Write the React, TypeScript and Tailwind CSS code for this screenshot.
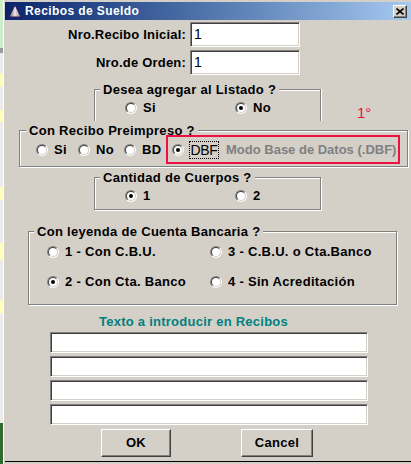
import React from 'react'

type RadioProps = {
  label: string
  checked?: boolean
  className?: string
}

function RadioDot({ checked }: { checked?: boolean }) {
  return (
    <span className="flex h-[12px] w-[12px] shrink-0 items-center justify-center rounded-full border border-t-[#808080] border-l-[#808080] border-b-white border-r-white">
      <span className="flex h-[10px] w-[10px] items-center justify-center rounded-full border border-t-[#404040] border-l-[#404040] border-b-[#d4d0c8] border-r-[#d4d0c8] bg-white">
        {checked && <span className="h-[4px] w-[4px] rounded-full bg-black" />}
      </span>
    </span>
  )
}

function Radio({ label, checked, className = '' }: RadioProps) {
  return (
    <label className={`flex h-[14px] items-center ${className}`}>
      <RadioDot checked={checked} />
      <span className="ml-[6px] text-[13px] leading-[14px] font-bold tracking-[0.3px]">{label}</span>
    </label>
  )
}

function Group({
  title,
  className = '',
  legendClass = 'ml-[5px]',
  children,
}: {
  title: string
  className?: string
  legendClass?: string
  children: React.ReactNode
}) {
  return (
    <fieldset className={`border border-[#808080] ${className}`}>
      <legend className={`bg-[#d4d0c8] px-[3px] text-[13px] leading-[13px] font-bold tracking-[0.3px] ${legendClass}`}>
        {title}
      </legend>
      {children}
    </fieldset>
  )
}

const sunken =
  'border border-t-[#808080] border-l-[#808080] border-b-white border-r-white bg-white shadow-[inset_1px_1px_0_#404040,inset_-1px_-1px_0_#d4d0c8]'

const raised =
  'border border-t-white border-l-white border-b-[#404040] border-r-[#404040] bg-[#d4d0c8] shadow-[inset_-1px_-1px_0_#808080]'

// what shows of the window behind, at the left edge
const strip = [
  { h: 48, c: '#cdeecb' },
  { h: 5, c: '#9a9a9a' },
  { h: 20, c: '#ececec' },
  { h: 14, c: '#fffcc0' },
  { h: 23, c: '#ececec' },
  { h: 12, c: '#fffcc0' },
  { h: 65, c: '#ececec' },
  { h: 13, c: '#fffcc0' },
  { h: 43, c: '#ececec' },
  { h: 17, c: '#fffcc0' },
  { h: 40, c: '#ececec' },
  { h: 13, c: '#fffcc0' },
  { h: 110, c: '#ececec' },
  { h: 41, c: '#2f6b2f' },
]

export default function App() {
  return (
    <div className="flex h-[464px] w-[411px] overflow-hidden bg-[#d4d0c8] font-['Liberation_Sans',Arial,sans-serif] text-black">
      <div className="flex w-[3px] flex-col">
        {strip.map((s, i) => (
          <div key={i} style={{ height: s.h, background: s.c }} />
        ))}
      </div>
      <div className="w-[1px] bg-white" />
      <div className="w-[1px] bg-[#d4d0c8]" />

      <div className="flex w-[406px] flex-col">
        {/* title bar */}
        <div className="mt-[2px] flex h-[18px] items-center bg-gradient-to-r from-[#0a246a] to-[#a6caf0] pl-[3px] pr-[4px]">
          <svg width="14" height="14" viewBox="0 0 14 14">
            <defs>
              <linearGradient id="pyr" x1="0" x2="1">
                <stop offset="0" stopColor="#5a5a5a" />
                <stop offset="0.5" stopColor="#e8e8e8" />
                <stop offset="1" stopColor="#7a7a7a" />
              </linearGradient>
            </defs>
            <path d="M7 1 L13 13 L1 13 Z" fill="url(#pyr)" stroke="#3a1460" strokeWidth="1" strokeLinejoin="round" />
          </svg>
          <span className="ml-[3px] text-[12px] leading-[14px] font-bold tracking-[0.4px] text-white">Recibos de Sueldo</span>
          <button className={`ml-auto flex h-[13px] w-[14px] items-center justify-center ${raised}`}>
            <svg width="8" height="7" viewBox="0 0 8 7">
              <path d="M0.5 0.5 L7.5 6.5 M7.5 0.5 L0.5 6.5" stroke="#000" strokeWidth="1.6" />
            </svg>
          </button>
        </div>

        {/* numeric fields */}
        <div className="mt-[2px] flex items-center">
          <span className="w-[181px] text-right text-[13px] font-bold tracking-[0.2px]">Nro.Recibo Inicial:</span>
          <div className={`ml-[4px] flex h-[25px] w-[110px] items-center pl-[3px] text-[14px] ${sunken}`}>1</div>
        </div>
        <div className="mt-[3px] flex items-center">
          <span className="w-[181px] text-right text-[13px] font-bold tracking-[0.2px]">Nro.de Orden:</span>
          <div className={`ml-[4px] flex h-[25px] w-[110px] items-center pl-[3px] text-[14px] ${sunken}`}>1</div>
        </div>

        {/* Desea agregar + 1° */}
        <div className="mt-[8px] flex items-start">
          <Group
            title="Desea agregar al Listado ?"
            className="ml-[89px] w-[227px] border-b-0 pb-[6px] shadow-[inset_1px_1px_0_#fff,1px_0_0_#fff]"
          >
            <div className="mt-[5px] flex pl-[30px]">
              <Radio label="Si" className="w-[110px]" />
              <Radio label="No" checked />
            </div>
          </Group>
          <span className="ml-[36px] mt-[22px] text-[15px] leading-[16px] text-[#e8103a]">1°</span>
        </div>

        {/* Con Recibo Preimpreso */}
        <Group
          title="Con Recibo Preimpreso ?"
          legendClass="ml-[6px]"
          className="ml-[14px] mt-[3px] w-[389px] pb-[2px] shadow-[inset_1px_1px_0_#fff,1px_1px_0_#fff]"
        >
          <div className="-mt-[2px] flex items-center pl-[16px]">
            <Radio label="Si" className="w-[42px]" />
            <Radio label="No" className="w-[46px]" />
            <Radio label="BD" className="w-[42px]" />
            <div className="flex h-[29px] w-[234px] items-center border-2 border-[#ee1040] pl-[4px]">
              <RadioDot checked />
              <span className="ml-[5px] flex h-[18px] w-[30px] items-center justify-center border border-dotted border-black text-[14px] leading-[14px] tracking-[-0.3px]">
                DBF
              </span>
              <span className="ml-[7px] text-[13px] leading-[14px] font-bold text-[#808080]">Modo Base de Datos (.DBF)</span>
            </div>
          </div>
        </Group>

        {/* Cantidad de Cuerpos */}
        <Group
          title="Cantidad de Cuerpos ?"
          className="ml-[89px] mt-[4px] w-[227px] pb-[6px] shadow-[inset_1px_1px_0_#fff,1px_1px_0_#fff]"
        >
          <div className="mt-[5px] flex pl-[30px]">
            <Radio label="1" checked className="w-[110px]" />
            <Radio label="2" />
          </div>
        </Group>

        {/* Con leyenda de Cuenta Bancaria */}
        <Group
          title="Con leyenda de Cuenta Bancaria ?"
          className="ml-[23px] mt-[15px] w-[369px] pb-[15px] shadow-[inset_1px_1px_0_#fff,1px_1px_0_#fff]"
        >
          <div className="mt-[7px] grid grid-cols-[163px_1fr] gap-y-[16px] pl-[18px]">
            <Radio label="1 - Con C.B.U." />
            <Radio label="3 - C.B.U. o Cta.Banco" />
            <Radio label="2 - Con Cta. Banco" checked />
            <Radio label="4 - Sin Acreditación" />
          </div>
        </Group>

        {/* Texto a introducir */}
        <div className="ml-[94px] mt-[9px] text-[13px] leading-[16px] font-bold tracking-[0.25px] text-[#008080]">
          Texto a introducir en Recibos
        </div>
        <div className="ml-[45px] mt-[2px] flex w-[318px] flex-col gap-[3px]">
          {[0, 1, 2, 3].map((i) => (
            <div key={i} className={`h-[21px] ${sunken}`} />
          ))}
        </div>

        {/* buttons */}
        <div className="mt-[4px] flex">
          <button className={`ml-[96px] h-[28px] w-[70px] text-[13px] font-bold tracking-[0.3px] ${raised}`}>OK</button>
          <button className={`ml-[70px] h-[28px] w-[72px] text-[13px] font-bold tracking-[0.3px] ${raised}`}>Cancel</button>
        </div>

        <div className="mt-[4px] h-[1px] bg-black" />
      </div>
    </div>
  )
}
